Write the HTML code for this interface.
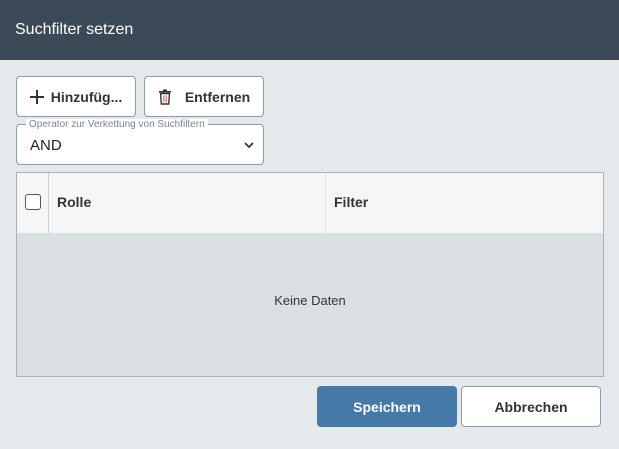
<!DOCTYPE html>
<html><head><style>
*{box-sizing:border-box;margin:0;padding:0}
body{width:619px;height:449px;background:#e5e9ec;font-family:"Liberation Sans",sans-serif;position:relative;overflow:hidden;color:#333}
.hdr{position:absolute;left:0;top:0;width:619px;height:60px;background:#3b4855;color:#fff;font-size:16px;line-height:60px;padding-left:15px}
.btn{position:absolute;background:#fff;border:1px solid #8e9aa6;border-radius:4px;font-size:14px;font-weight:bold;color:#333;display:flex;align-items:center;justify-content:center}
.sel{position:absolute;left:16px;top:124px;width:248px;height:41px;background:#fff;border:1px solid #8e9aa6;border-radius:4px}
.lbl{position:absolute;left:9px;top:-6px;background:#fff;padding:0 3px;font-size:10px;color:#7a8590;line-height:11px}
.grid{position:absolute;left:16px;top:172px;width:588px;height:205px;border:1px solid #aab3bc;background:#dadfe2}
.gh{position:absolute;left:0;top:0;width:586px;height:60px;background:#f6f6f6;font-size:14px;font-weight:bold;color:#333}
</style></head><body>
<div class="hdr">Suchfilter setzen</div>
<div class="btn" style="left:16px;top:76px;width:120px;height:41px"><svg width="14" height="14" viewBox="0 0 14 14" style="margin-right:7px"><path d="M7 0v14M0 7h14" stroke="#333" stroke-width="2"/></svg>Hinzufüg...</div>
<div class="btn" style="left:144px;top:76px;width:120px;height:41px">
<svg width="14" height="16" viewBox="0 0 14 16" style="margin-right:13px"><rect x="1" y="2" width="12" height="1.6" fill="#333"/><rect x="5" y="0.5" width="4" height="2" fill="#333"/><path d="M2.5 4.5h9l-0.8 10.5h-7.4z" fill="none" stroke="#333" stroke-width="1.4"/><path d="M5.3 6.5v7M7 6.5v7M8.7 6.5v7" stroke="#c77" stroke-width="0.9"/></svg>Entfernen</div>
<div class="sel"><div class="lbl">Operator zur Verkettung von Suchfiltern</div>
<div style="position:absolute;left:13px;top:12px;font-size:15px;color:#222">AND</div>
<svg width="10" height="7" viewBox="0 0 10 7" style="position:absolute;right:9px;top:17px"><path d="M1 1l4 4 4-4" fill="none" stroke="#333" stroke-width="1.8"/></svg></div>
<div class="grid"><div class="gh">
<div style="position:absolute;left:8px;top:21px;width:16px;height:16px;border:1.3px solid #555;border-radius:3px;background:#fff"></div>
<div style="position:absolute;left:31px;top:0;width:1px;height:60px;background:#c8ced3"></div>
<div style="position:absolute;left:40px;top:21px">Rolle</div>
<div style="position:absolute;left:308px;top:0;width:1px;height:60px;background:#e0e3e6"></div>
<div style="position:absolute;left:317px;top:21px">Filter</div></div>
<div style="position:absolute;left:0;top:120px;width:586px;text-align:center;font-size:13px;color:#333">Keine Daten</div></div>
<div class="btn" style="left:317px;top:386px;width:140px;height:41px;background:#4679a8;border-color:#4679a8;color:#fff">Speichern</div>
<div class="btn" style="left:461px;top:386px;width:140px;height:41px">Abbrechen</div>
</body></html>
